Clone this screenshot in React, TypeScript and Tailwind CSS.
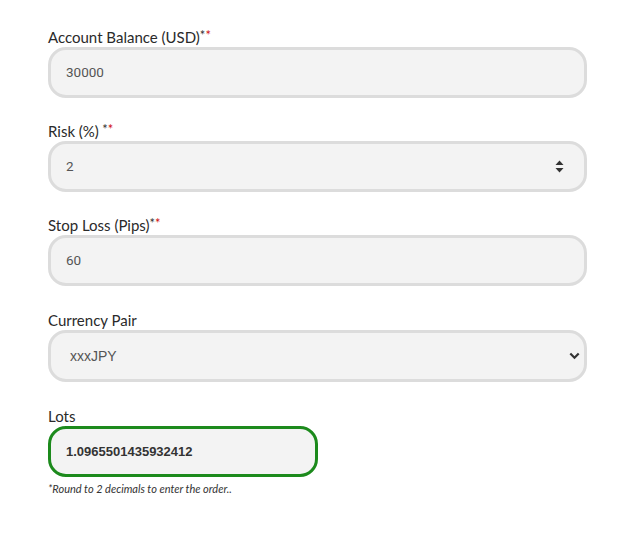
import React from "react";

const Label = ({ text, required, spaced }: { text: string; required?: boolean; spaced?: boolean }) => (
	<div className="text-[15px] leading-5 text-[#2a2a2a]" style={{ fontFamily: "Lato, sans-serif" }}>
		{text}
		{required && (
			<span className="text-[13px] leading-none relative -top-[3px] text-[#333]">
				{spaced ? " " : ""}*<span className="text-[#d01010]">*</span>
			</span>
		)}
	</div>
);

const Field = ({ value, children }: { value: string; children?: React.ReactNode }) => (
	<div className="flex items-center h-[51px] w-full rounded-[18px] border-[3px] border-[#dcdcdc] bg-[#f3f3f3] pl-[15px] pr-5">
		<span className="flex-1 text-[13.5px] text-[#555]" style={{ fontFamily: "Roboto, sans-serif" }}>
			{value}
		</span>
		{children}
	</div>
);

const App: React.FC = () => {
	return (
		<div className="min-h-screen bg-white pt-[27px] px-12">
			<div className="w-[539px]">
				<Label text="Account Balance (USD)" required />
				<Field value="30000" />

				<div className="mt-[23px]">
					<Label text="Risk (%)" required spaced />
					<Field value="2">
						<svg width="9" height="13" viewBox="0 0 9 13" className="text-[#333]">
							<path d="M4.5 0.5 L8.5 5 L0.5 5 Z" fill="currentColor" />
							<path d="M4.5 12.5 L8.5 8 L0.5 8 Z" fill="currentColor" />
						</svg>
					</Field>
				</div>

				<div className="mt-[23px]">
					<Label text="Stop Loss (Pips)" required />
					<Field value="60" />
				</div>

				<div className="mt-[24px]">
					<Label text="Currency Pair" />
					<div className="flex items-center h-[52px] w-full rounded-[18px] border-[3px] border-[#dcdcdc] bg-[#f3f3f3] pl-[19px] pr-[4px]">
						<span className="flex-1 text-[14px] text-[#555]" style={{ fontFamily: "'Liberation Sans', Arial, sans-serif" }}>
							xxxJPY
						</span>
						<svg width="11" height="8" viewBox="0 0 11 8" className="text-[#333]">
							<path d="M1.3 1.5 L5.5 5.7 L9.7 1.5" fill="none" stroke="currentColor" strokeWidth="2.2" />
						</svg>
					</div>
				</div>

				<div className="mt-[24px]">
					<Label text="Lots" />
					<div className="flex items-center h-[51px] w-[270px] rounded-[18px] border-[3px] border-[#1c8a1c] bg-[#f3f3f3] pl-[15px]">
						<span className="text-[13px] font-bold text-[#333]" style={{ fontFamily: "'Liberation Sans', Arial, sans-serif" }}>
							1.0965501435932412
						</span>
					</div>
					<p className="mt-[4px] text-[11px] italic text-[#333]" style={{ fontFamily: "Lato, sans-serif" }}>
						*Round to 2 decimals to enter the order..
					</p>
				</div>
			</div>
		</div>
	);
};

export default App;
